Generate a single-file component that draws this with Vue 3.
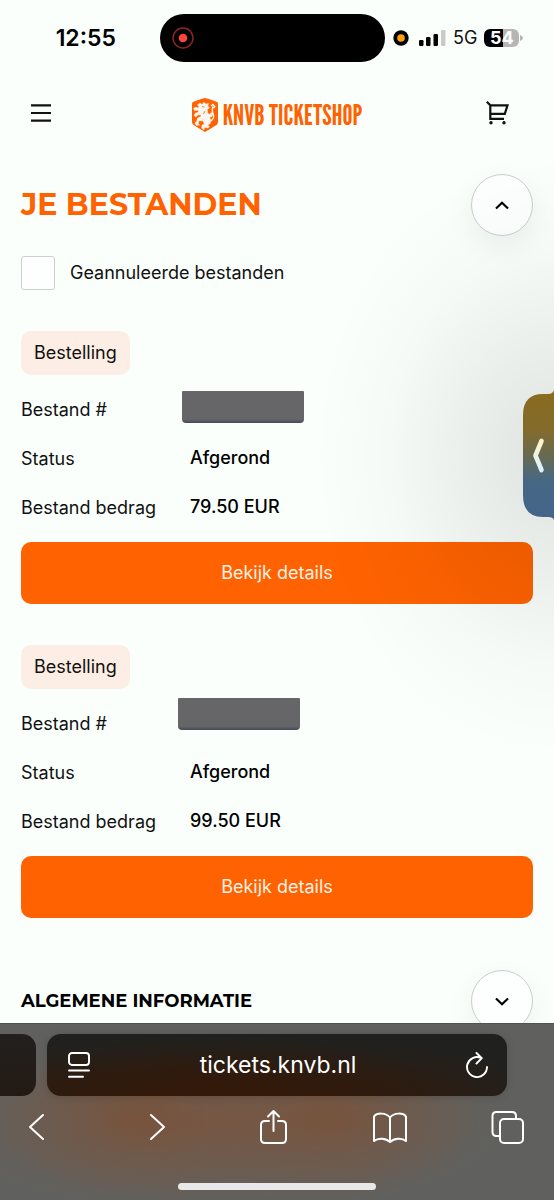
<script setup>
import { ref } from 'vue'

const showCancelled = ref(false)
const address = ref('tickets.knvb.nl')

const orders = [
  { id: 1, status: 'Afgerond', amount: '79.50 EUR', mask: 'mask-low' },
  { id: 2, status: 'Afgerond', amount: '99.50 EUR', mask: 'mask-high' },
]
</script>

<template>
  <div class="screen">
    <div class="status">
      <div class="clock">12:55</div>
      <div class="island">
        <svg width="22" height="22" viewBox="0 0 22 22" aria-hidden="true">
          <circle cx="11" cy="11" r="10" fill="none" stroke="#8b2522" stroke-width="1.5" />
          <circle cx="11" cy="11" r="4.3" fill="#ff453a" />
        </svg>
      </div>
      <div class="signals">
        <svg width="16" height="16" viewBox="0 0 16 16" aria-hidden="true">
          <circle cx="8" cy="8" r="7.7" fill="#000" />
          <circle cx="8" cy="8" r="3.8" fill="#ff9f0a" />
        </svg>
        <svg width="27" height="18" viewBox="0 0 27 18" aria-hidden="true">
          <rect x="0" y="11" width="4.5" height="6" rx="1.2" />
          <rect x="7" y="8" width="4.5" height="9" rx="1.2" />
          <rect x="14.5" y="5" width="4.5" height="12" rx="1.2" />
          <rect x="22" y="1" width="4.5" height="16" rx="1.2" fill="#c8cbc9" />
        </svg>
        <span class="network">5G</span>
        <div class="battery">
          <span class="level">54</span>
          <svg width="3" height="6" viewBox="0 0 3 6" aria-hidden="true">
            <path d="M0 0Q3 1 3 3T0 6Z" fill="#b4b7b5" />
          </svg>
        </div>
      </div>
    </div>

    <header class="topbar">
      <button class="plain" type="button" aria-label="Menu">
        <svg width="20" height="18" viewBox="0 0 20 18" aria-hidden="true">
          <path d="M0 1.3h20M0 9h20M0 16.7h20" stroke="#111" stroke-width="2.2" />
        </svg>
      </button>
      <a class="logo" href="#">
        <svg width="26" height="34" viewBox="0 0 26 34" aria-hidden="true">
          <path d="M13 0C17 1 21 2 25 4Q26 4.500 26 6V24Q26 26 24.500 27L13 34 1.500 27Q0 26 0 24V6Q0 4.500 1 4C5 2 9 1 13 0Z" fill="#ff6200" />
          <path d="M8 5l2 1.500 2-2.200 1.500 1.800 3-.7-.7 2.800 1.700 1.500-2.300 1.800.4 3.500 2.500 1.800.8-2.200 2 .8-.8 2.800-2.500 1.300 1.500 3-1.300 3.500-2.200.7 1.800 2.300-2 .9-2.700-.7-.8 2.600-2.200-1.700.4-3 2.300-.9-1.500-3.500-4 .2-.8 2.700 1.500 1.400-3.500.3-1.200-2.200 1.800-1.800.9-3.300 3.500-1.500-.4-1.800-3 .3-1.900 2-1.600-1.500.8-2.100 3.700-1.500-.8-1.600-3.500.1-.8-2.200 2.200-.9 2.300.8.8-1.600-1.500-1.600Z" fill="#fff6ef" stroke="#fff6ef" stroke-width=".5" />
          <path d="M10 8.300l2.500.8M13 13l-1.500 3" fill="none" stroke="#ff6200" stroke-width=".8" />
          <path d="M17.500 23c4-1 5-4 3.500-7.500-1.500-3-.8-5.500-.2-7M19 8l1.800-1.600 2 2.100-1.500 1.700" fill="none" stroke="#fff6ef" stroke-width="1.400" />
        </svg>
        <span>KNVB TICKETSHOP</span>
      </a>
      <button class="plain cart" type="button" aria-label="Winkelwagen">
        <svg width="23" height="24" viewBox="0 0 23 24" fill="none" stroke="#111" stroke-width="2.200" aria-hidden="true">
          <path d="M.8.8l3.500 3.500V17.800H18M4.300 4.300H21.500L18.800 12.800H4.300" />
          <circle cx="5" cy="21.800" r="1.700" fill="#111" stroke="none" />
          <circle cx="18" cy="21.800" r="1.700" fill="#111" stroke="none" />
        </svg>
      </button>
    </header>

    <main class="content">
      <div class="section-head">
        <h1>JE BESTANDEN</h1>
        <button class="round" type="button" aria-label="Inklappen">
          <svg width="14" height="9" viewBox="0 0 14 9" aria-hidden="true">
            <path d="M1 7.500L7 1.700l6 5.800" fill="none" stroke="#000" stroke-width="2.200" />
          </svg>
        </button>
      </div>

      <label class="filter">
        <input v-model="showCancelled" type="checkbox" />
        <span>Geannuleerde bestanden</span>
      </label>

      <article v-for="order in orders" :key="order.id" class="order">
        <span class="badge">Bestelling</span>
        <dl>
          <dt>Bestand #</dt>
          <dd><span class="mask" :class="order.mask"></span></dd>
          <dt>Status</dt>
          <dd>{{ order.status }}</dd>
          <dt>Bestand bedrag</dt>
          <dd>{{ order.amount }}</dd>
        </dl>
        <button class="details" type="button">Bekijk details</button>
      </article>

      <div class="section-head info">
        <h2>ALGEMENE INFORMATIE</h2>
        <button class="round" type="button" aria-label="Uitklappen">
          <svg width="14" height="9" viewBox="0 0 14 9" aria-hidden="true">
            <path d="M1 1.500l6 5.800 6-5.800" fill="none" stroke="#000" stroke-width="2.200" />
          </svg>
        </button>
      </div>
    </main>

    <div class="glow"></div>
    <button class="side" type="button" aria-label="Paneel openen">
      <svg width="31" height="130" viewBox="0 0 31 130" aria-hidden="true">
        <defs>
          <linearGradient id="tab" x1="0" y1="0" x2="0" y2="1">
            <stop offset="0" stop-color="#8a6b20" />
            <stop offset=".3" stop-color="#846b2b" />
            <stop offset=".5" stop-color="#686a50" />
            <stop offset=".7" stop-color="#466885" />
            <stop offset="1" stop-color="#446489" />
          </linearGradient>
          <linearGradient id="arrow" x1="0" y1="0" x2="0" y2="1">
            <stop offset="0" stop-color="#fff4c8" />
            <stop offset="1" stop-color="#dcf1ff" />
          </linearGradient>
        </defs>
        <path d="M31 0Q30 4 25 4H20Q0 4 0 25V105Q0 127 20 127H25Q30 127 31 130Z" fill="url(#tab)" />
        <path d="M18.500 51l-6 14.500 6 14.500" fill="none" stroke="url(#arrow)" stroke-width="4.600" stroke-linecap="round" stroke-linejoin="round" />
      </svg>
    </button>

    <footer class="browser">
      <div class="tabs">
        <div class="previous"></div>
        <div class="address">
          <button class="plain" type="button" aria-label="Paginamenu">
            <svg width="22" height="26" viewBox="0 0 22 26" fill="none" stroke="#fff" stroke-width="1.900" stroke-linecap="round" aria-hidden="true">
              <rect x="1" y="1" width="20" height="12" rx="3" />
              <path d="M1 18.500h20M1 24.800h14" />
            </svg>
          </button>
          <input v-model="address" type="text" aria-label="Adres" />
          <button class="plain" type="button" aria-label="Vernieuwen">
            <svg width="22" height="26" viewBox="0 0 22 26" fill="none" stroke="#fff" stroke-width="1.900" stroke-linecap="round" stroke-linejoin="round" aria-hidden="true">
              <path d="M21 15A10 10 0 1 1 15 5.900M10.500 1l5.300 5.200-5.300 5.300" />
            </svg>
          </button>
        </div>
        <div class="next"></div>
      </div>
      <nav class="tools">
        <button class="plain" type="button" aria-label="Vorige">
          <svg width="36" height="36" viewBox="0 0 36 36"><path d="M24 6L11 18l13 12" /></svg>
        </button>
        <button class="plain" type="button" aria-label="Volgende">
          <svg width="36" height="36" viewBox="0 0 36 36"><path d="M14 6l13 12-13 12" /></svg>
        </button>
        <button class="plain" type="button" aria-label="Delen">
          <svg width="36" height="36" viewBox="0 0 36 36"><path d="M14 12H10Q6 12 6 16V30Q6 34 10 34H27Q31 34 31 30V16Q31 12 27 12H23M18.500 22V2M13 7.500L18.500 2 24 7.500" /></svg>
        </button>
        <button class="plain" type="button" aria-label="Bladwijzers">
          <svg width="36" height="36" viewBox="0 0 36 36"><path d="M18 33V8.500C14 3.500 5 3.500 2 7.500V32C6 28.500 14 29 18 33C22 29 30 28.500 34 32V7.500C31 3.500 22 3.500 18 8.500" /></svg>
        </button>
        <button class="plain" type="button" aria-label="Tabbladen">
          <svg width="36" height="36" viewBox="0 0 36 36"><path d="M10 27H6.500Q2.500 27 2.500 23V7Q2.500 3 6.500 3H22Q26 3 26 7V10" /><rect x="10" y="10" width="23" height="24" rx="4" /></svg>
        </button>
      </nav>
      <div class="home"></div>
    </footer>
  </div>
</template>

<style>
body {
  background: #fafffc;
}
</style>

<style scoped>
.screen {
  position: relative;
  display: flex;
  flex-direction: column;
  height: 100vh;
  overflow: hidden;
  background: #fafffc;
  color: #111;
  font-family: Inter, "Noto Sans", sans-serif;
  font-size: 18px;
  line-height: 24px;
}
.screen * {
  box-sizing: border-box;
}
button,
input {
  margin: 0;
  font: inherit;
}
svg {
  display: block;
}
.plain {
  padding: 0;
  border: 0;
  background: none;
}
.status {
  display: grid;
  grid-template-columns: 17fr 24fr 18fr;
  align-items: center;
  height: 76px;
  flex: none;
}
.clock {
  padding-left: 12px;
  text-align: center;
  font-size: 23px;
  font-weight: 600;
  color: #000;
}
.island {
  display: flex;
  align-items: center;
  height: 48px;
  padding-left: 12px;
  border-radius: 24px;
  background: #000;
}
.signals {
  display: flex;
  align-items: center;
  padding-left: 8px;
}
.signals svg + svg {
  margin-left: 10px;
}
.network {
  margin: 0 7px;
  font-size: 18px;
}
.battery {
  display: flex;
  align-items: center;
  gap: 1px;
}
.level {
  width: 35px;
  height: 18px;
  border-radius: 6px;
  background: linear-gradient(90deg, #000 54%, #b4b7b5 54%);
  color: #fff;
  text-align: center;
  font-size: 18px;
  font-weight: 700;
  line-height: 18px;
}
.topbar {
  display: grid;
  grid-template-columns: 1fr auto 1fr;
  align-items: center;
  flex: none;
  height: 74px;
  padding: 0 31px;
}
.cart {
  justify-self: end;
  margin-right: 14px;
}
.logo {
  display: flex;
  align-items: center;
  gap: 5px;
  padding-top: 4px;
  color: #ff6200;
  font-family: "League Gothic", "Bebas Neue", Oswald, "Liberation Sans Narrow", sans-serif;
  font-size: 28px;
  line-height: 34px;
  text-decoration: none;
  white-space: nowrap;
}
.content {
  flex: 1;
  min-height: 0;
  overflow: hidden;
  padding: 24px 21px 0;
}
.section-head {
  display: flex;
  align-items: center;
  justify-content: space-between;
}
h1,
h2 {
  margin: 0;
  font-family: Montserrat, Inter, sans-serif;
  font-weight: 700;
}
h1 {
  color: #ff6200;
  font-size: 30px;
  line-height: 38px;
}
h2 {
  color: #000;
  font-size: 18px;
}
.round {
  display: grid;
  place-items: center;
  width: 62px;
  height: 62px;
  padding: 0;
  border: 1px solid #c9cdcb;
  border-radius: 50%;
  background: #fcfffe;
  box-shadow: 0 10px 30px rgba(0, 0, 0, 0.06);
}
.filter {
  display: flex;
  align-items: center;
  gap: 15px;
  margin-top: 20px;
}
.filter input {
  appearance: none;
  width: 34px;
  height: 34px;
  border: 1px solid #ccd0d2;
  border-radius: 3px;
  background: #fdfefe;
}
.order {
  margin-top: 41px;
}
.badge {
  display: inline-block;
  padding: 10px 13px;
  border-radius: 10px;
  background: #fceee5;
}
dl {
  display: grid;
  grid-template-columns: 169px 1fr;
  row-gap: 25px;
  margin: 23px 0 22px;
}
dt,
dd {
  position: relative;
  margin: 0;
}
dd {
  font-weight: 500;
  line-height: 22px;
  color: #000;
}
.mask {
  position: absolute;
  width: 122px;
  height: 32px;
  border-radius: 1px 1px 4px 4px;
  background: linear-gradient(#666668 88%, #48485a);
}
.mask-low {
  left: -8px;
  top: -7px;
}
.mask-high {
  left: -12px;
  top: -14px;
}
.details {
  display: block;
  width: 100%;
  height: 62px;
  border: 0;
  border-radius: 10px;
  background: #ff6200;
  color: #fff1e6;
}
.info {
  margin-top: 52px;
}
.glow {
  position: absolute;
  top: 156px;
  right: 0;
  width: 240px;
  height: 600px;
  background: radial-gradient(ellipse 100% 50% at 100% 50%, rgba(0, 0, 0, 0.11), rgba(0, 0, 0, 0.065) 35%, rgba(0, 0, 0, 0.02) 70%, transparent);
  pointer-events: none;
}
.side {
  position: absolute;
  top: 390px;
  right: 0;
  padding: 0;
  border: 0;
  background: none;
}
.browser {
  position: relative;
  flex: none;
  padding-top: 11px;
  background:
    radial-gradient(ellipse 27% 45% at 25% 54%, rgba(128, 78, 48, 0.6), rgba(122, 84, 60, 0.35) 50%, transparent),
    radial-gradient(ellipse 27% 45% at 60% 54%, rgba(128, 78, 48, 0.6), rgba(122, 84, 60, 0.35) 50%, transparent),
    radial-gradient(ellipse 52% 52% at 40% 56%, rgba(122, 86, 64, 0.7), transparent),
    #60615f;
  box-shadow: inset 0 1px #505150;
}
.tabs {
  display: flex;
  gap: 11px;
  height: 62px;
}
.previous {
  width: 36px;
  border-radius: 0 14px 14px 0;
  background: linear-gradient(#21201e, #241a14);
}
.next {
  width: 36px;
}
.address {
  flex: 1;
  min-width: 0;
  display: flex;
  align-items: center;
  padding: 0 19px 0 21px;
  border-radius: 14px;
  background:
    radial-gradient(ellipse 75% 95% at 38% 100%, #351807, rgba(53, 24, 7, 0.7) 45%, transparent),
    #20211f;
  box-shadow: 0 1px 8px rgba(0, 0, 0, 0.15);
}
.address input {
  flex: 1;
  min-width: 0;
  padding: 0;
  border: 0;
  outline: 0;
  background: none;
  color: #fff;
  text-align: center;
  font-size: 23px;
  line-height: 30px;
}
.tools {
  display: flex;
  justify-content: space-between;
  padding: 13px 28px 0 19px;
}
.tools svg {
  fill: none;
  stroke: #fff;
  stroke-width: 2;
  stroke-linecap: round;
  stroke-linejoin: round;
}
.home {
  width: 198px;
  height: 7px;
  margin: 38px auto 10px;
  border-radius: 4px;
  background: #e8e8e8;
}
</style>
